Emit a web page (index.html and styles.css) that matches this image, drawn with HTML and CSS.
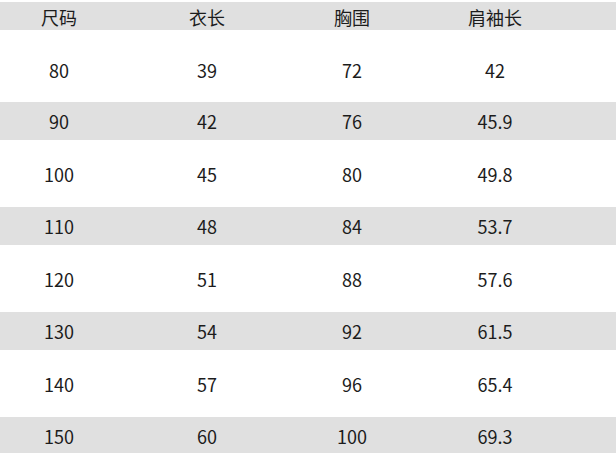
FILE: index.html
```html
<!DOCTYPE html>
<html lang="zh-CN">
<head>
<meta charset="utf-8">
<title>尺码表</title>
<link rel="stylesheet" href="styles.css">
</head>
<body>
<div class="table">
  <div class="row head"><span>尺码</span><span>衣长</span><span>胸围</span><span>肩袖长</span></div>
  <div class="row first"><span>80</span><span>39</span><span>72</span><span>42</span></div>
  <div class="row alt"><span>90</span><span>42</span><span>76</span><span>45.9</span></div>
  <div class="row"><span>100</span><span>45</span><span>80</span><span>49.8</span></div>
  <div class="row alt"><span>110</span><span>48</span><span>84</span><span>53.7</span></div>
  <div class="row"><span>120</span><span>51</span><span>88</span><span>57.6</span></div>
  <div class="row alt"><span>130</span><span>54</span><span>92</span><span>61.5</span></div>
  <div class="row"><span>140</span><span>57</span><span>96</span><span>65.4</span></div>
  <div class="row alt"><span>150</span><span>60</span><span>100</span><span>69.3</span></div>
</div>
</body>
</html>
```

FILE: styles.css
```css
html, body {
  margin: 0;
  padding: 0;
  background: #ffffff;
}
body {
  width: 616px;
  height: 453px;
  overflow: hidden;
  font-family: "Noto Sans CJK SC", "Noto Sans", sans-serif;
  font-size: 18px;
  color: #1c1c1c;
}
.table {
  display: flex;
  flex-direction: column;
  padding-top: 2px;
}
.row {
  display: grid;
  grid-template-columns: 118px 178px 112px 174px;
  align-items: center;
  height: 67px;
  box-sizing: border-box;
}
.row span {
  text-align: center;
  line-height: 24px;
}
.row.head {
  height: 28px;
  background: #e0e0e0;
  padding-top: 1px;
}
.row.first {
  height: 72px;
  padding-top: 8px;
}
.row.alt {
  height: 38px;
  background: #e0e0e0;
}
```
